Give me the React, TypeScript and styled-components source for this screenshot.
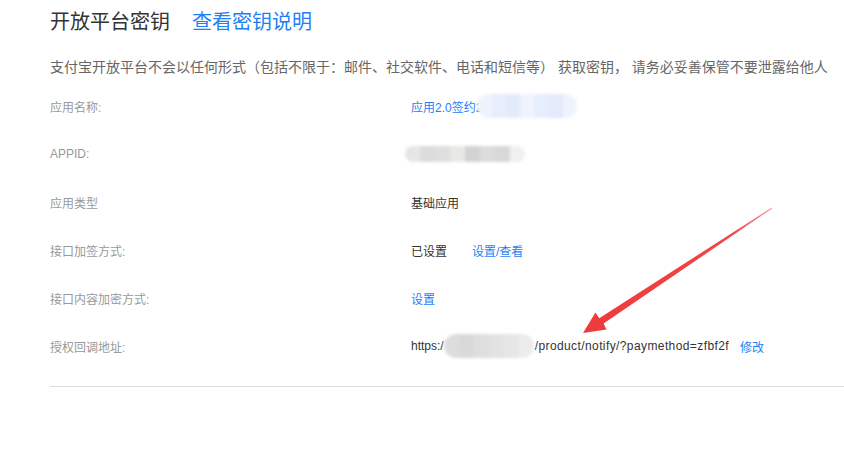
import React from 'react'
import styled, { createGlobalStyle } from 'styled-components'

const GlobalStyle = createGlobalStyle`
    body {
        margin: 0;
        background: #fff;
        font-family: "Liberation Sans", "Noto Sans CJK SC", sans-serif;
    }
`

interface RowData {
    label: string,
    value: React.ReactNode
}

const Page = styled.div`
    position: relative;
    width: 844px;
    height: 453px;
    padding-left: 50px;
    box-sizing: border-box;
    overflow: hidden;
`

const TitleBar = styled.div`
    display: flex;
    align-items: center;
    gap: 22px;
    padding-top: 8px;
    font-size: 20px;
    line-height: 28px;
    color: #333;

    a {
        color: #1f7ff5;
        text-decoration: none;
    }
`

const Notice = styled.p`
    margin: 20px 0 4px;
    font-size: 14px;
    line-height: 22px;
    color: #666;
    white-space: nowrap;
`

const Row = styled.div`
    display: grid;
    grid-template-columns: 361px 1fr;
    align-items: center;
    height: 48px;
    font-size: 12px;
`

const Label = styled.span`
    color: #999;
`

const Value = styled.span`
    display: flex;
    align-items: center;
    color: #333;
    white-space: nowrap;
`

const Link = styled.a<{ $gap?: number }>`
    color: #1f7ff5;
    text-decoration: none;
    margin-left: ${p => p.$gap || 0}px;
`

const Url = styled.span`
    letter-spacing: 0.4px;
    margin-left: 1px;
`

const Mosaic = styled.span<{ $w: number, $h: number, $shift?: number }>`
    display: inline-flex;
    width: ${p => p.$w}px;
    height: ${p => p.$h}px;
    margin-left: ${p => p.$shift || 0}px;
    border-radius: ${p => p.$h / 2}px;
    overflow: hidden;
    filter: blur(1.5px);

    i {
        flex: 1;
    }
`

const Divider = styled.div`
    margin-top: 16px;
    height: 1px;
    background: #dcdcdc;
`

const Arrow = styled.svg`
    position: absolute;
    left: 0;
    top: 0;
    pointer-events: none;
`

const blur = (colors: string[]) => colors.map((c, i) => <i key={i} style={{ background: c }} />)

const rows: RowData[] = [
    {
        label: '应用名称:',
        value: (
            <>
                <Link>应用2.0签约2</Link>
                <Mosaic $w={100} $h={24} $shift={-5}>
                    {blur(['#eef3fd', '#e6edfc', '#e3ebfb', '#eef3fd', '#e6edfc', '#e3eafb', '#eef3fd'])}
                </Mosaic>
            </>
        )
    },
    {
        label: 'APPID:',
        value: (
            <Mosaic $w={120} $h={16} $shift={-6}>
                {blur(['#e6e6e6', '#dcdcdc', '#dedede', '#e8e8e6', '#d3d3d3', '#dcdcdc', '#d8d8d8', '#f0f0f2'])}
            </Mosaic>
        )
    },
    { label: '应用类型', value: <>基础应用</> },
    { label: '接口加签方式:', value: <>已设置<Link $gap={25}>设置/查看</Link></> },
    { label: '接口内容加密方式:', value: <Link>设置</Link> },
    {
        label: '授权回调地址:',
        value: (
            <>
                https:/
                <Mosaic $w={90} $h={24}>
                    {blur(['#dddddd', '#d9d9d9', '#dedede', '#e2e2e2', '#e6e6e6', '#ececec'])}
                </Mosaic>
                <Url>/product/notify/?paymethod=zfbf2f</Url>
                <Link $gap={11}>修改</Link>
            </>
        )
    }
]

const App: React.FC = () => {
    return (
        <Page>
            <GlobalStyle />
            <TitleBar>
                <span>开放平台密钥</span>
                <a>查看密钥说明</a>
            </TitleBar>
            <Notice>支付宝开放平台不会以任何形式（包括不限于：邮件、社交软件、电话和短信等） 获取密钥， 请务必妥善保管不要泄露给他人</Notice>
            {rows.map(r => (
                <Row key={r.label}>
                    <Label>{r.label}</Label>
                    <Value>{r.value}</Value>
                </Row>
            ))}
            <Divider />
            <Arrow width="844" height="453" viewBox="0 0 844 453">
                <defs>
                    <linearGradient id="fade" x1="772" y1="208" x2="583" y2="333" gradientUnits="userSpaceOnUse">
                        <stop offset="0" stopColor="#f6a0a0" />
                        <stop offset="0.2" stopColor="#f04848" />
                        <stop offset="1" stopColor="#ee3a3a" />
                    </linearGradient>
                </defs>
                <polygon
                    fill="url(#fade)"
                    points="772.3,208.4 603.6,323.5 606.5,329.5 583,333 595.5,312.5 599.2,318.2 771.7,207.6"
                />
            </Arrow>
        </Page>
    )
}

export default App
